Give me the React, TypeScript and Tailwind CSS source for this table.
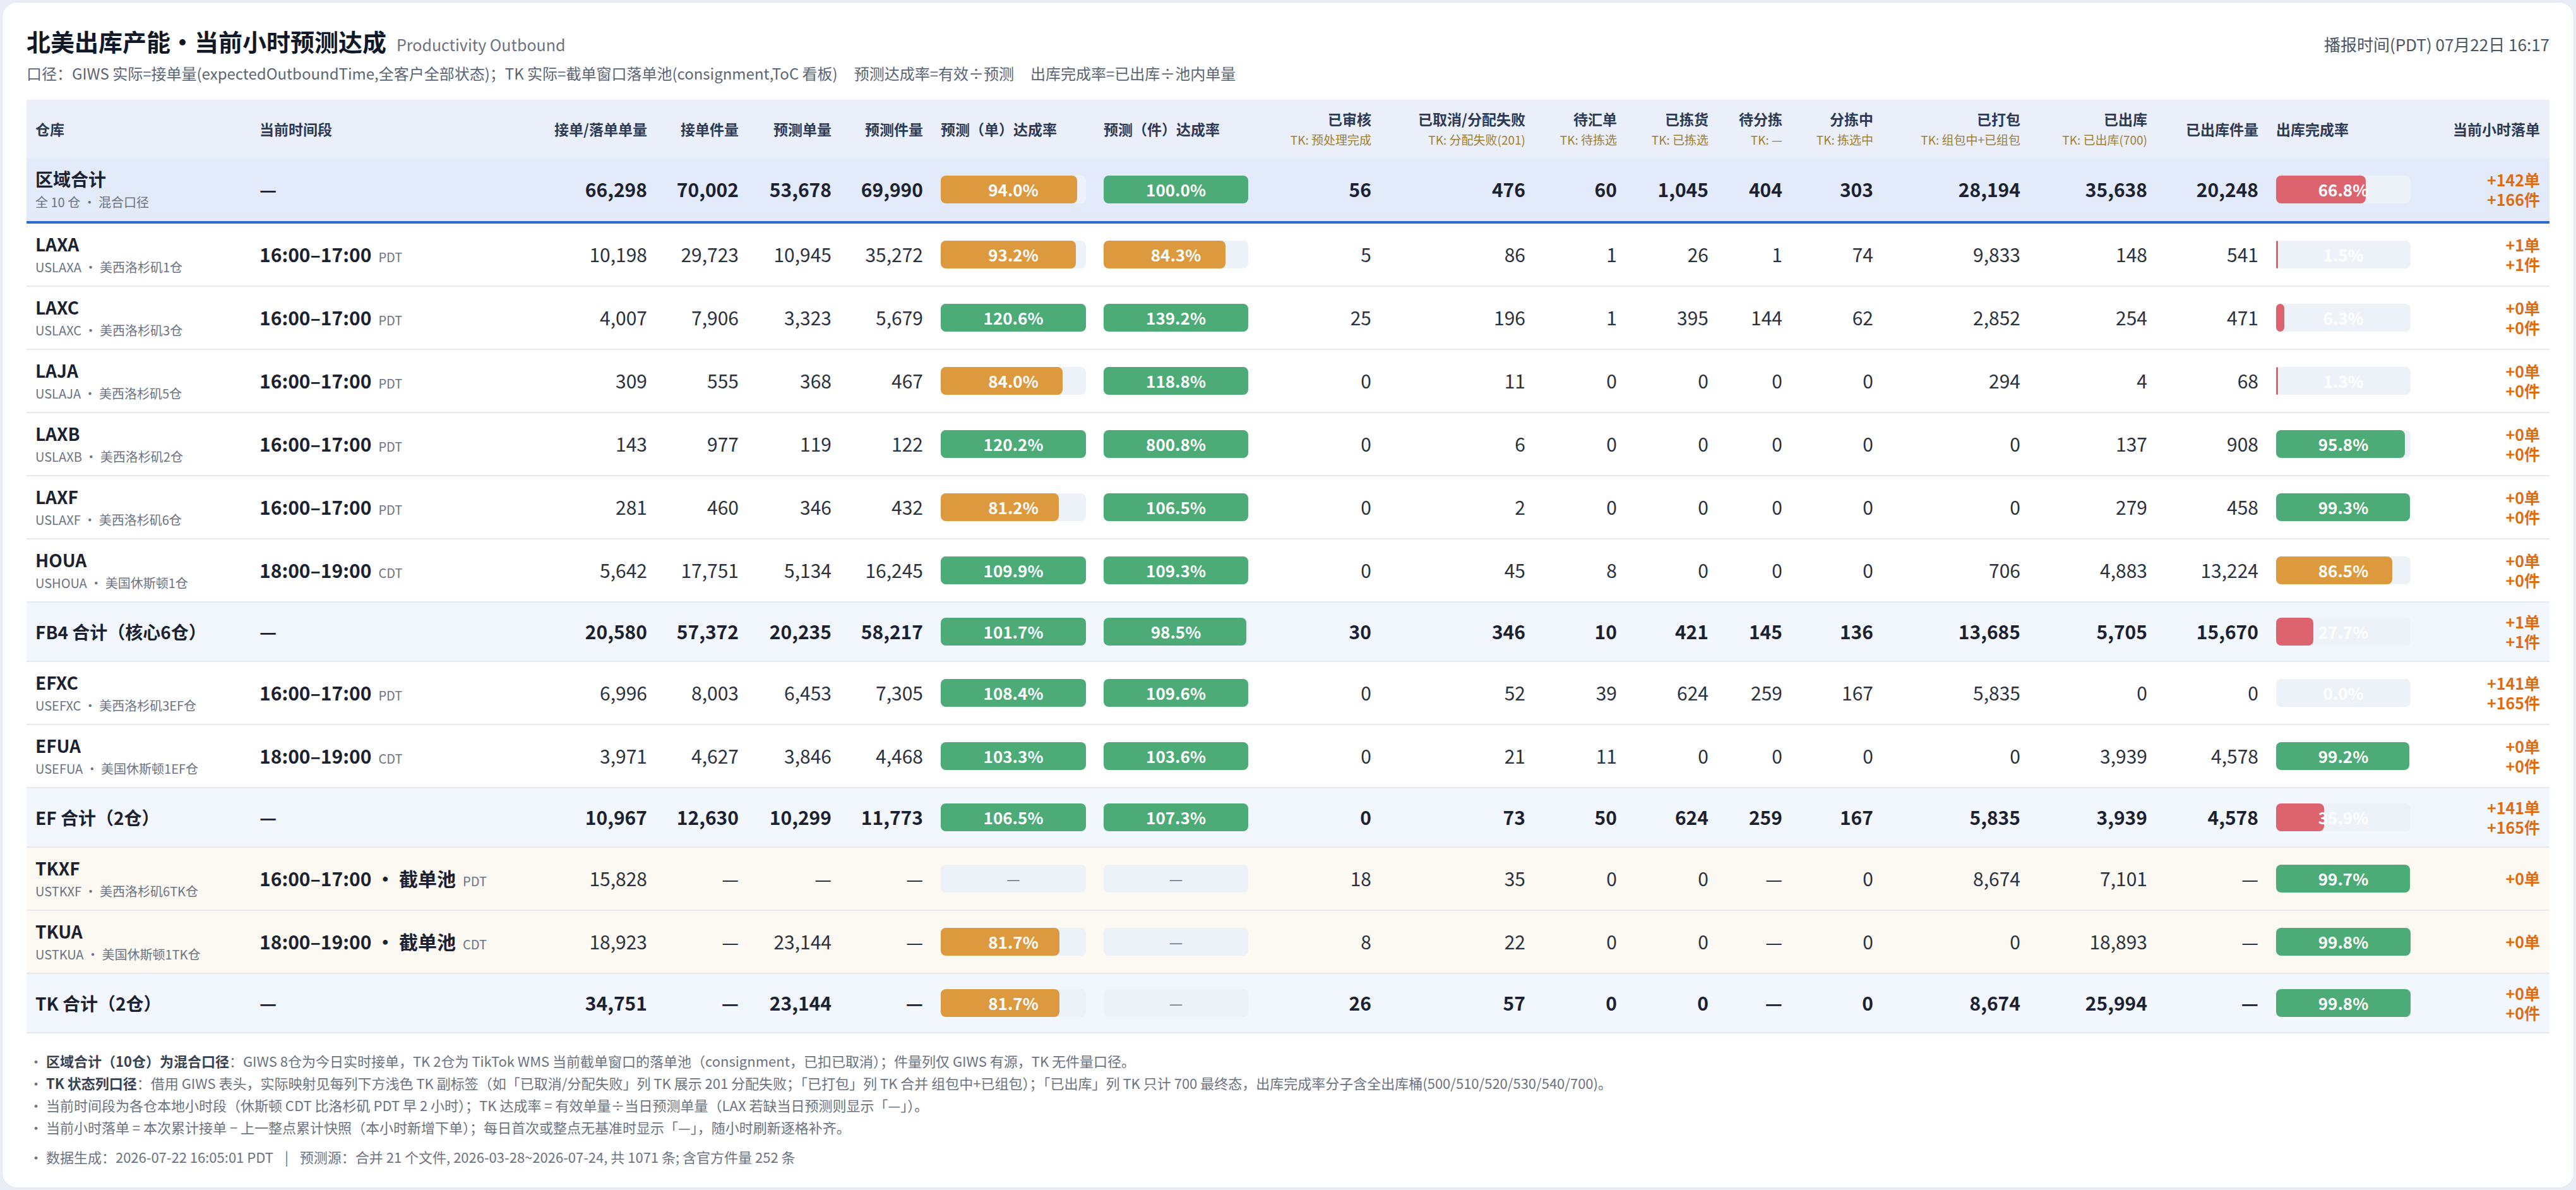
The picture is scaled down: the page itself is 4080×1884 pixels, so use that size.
import React from "react";

const GRID =
  "grid grid-cols-[355px_433px_209px_145px_147px_145px_258px_257px_195px_244px_145px_145px_117px_144px_233px_201px_176px_241px_205px]";

type Kind = "region" | "data" | "sub" | "tk";

type Row = {
  kind: Kind;
  name: string;
  sub?: string;
  time?: string;
  tz?: string;
  a: string[];
  b1: number | null;
  b2: number | null;
  c: string[];
  b3: number | null;
  d: string[];
};

const rows: Row[] = [
  {
    kind: "region",
    name: "区域合计",
    sub: "全 10 仓 · 混合口径",
    a: ["66,298", "70,002", "53,678", "69,990"],
    b1: 94.0,
    b2: 100.0,
    c: ["56", "476", "60", "1,045", "404", "303", "28,194", "35,638", "20,248"],
    b3: 66.8,
    d: ["+142单", "+166件"],
  },
  {
    kind: "data",
    name: "LAXA",
    sub: "USLAXA · 美西洛杉矶1仓",
    time: "16:00–17:00",
    tz: "PDT",
    a: ["10,198", "29,723", "10,945", "35,272"],
    b1: 93.2,
    b2: 84.3,
    c: ["5", "86", "1", "26", "1", "74", "9,833", "148", "541"],
    b3: 1.5,
    d: ["+1单", "+1件"],
  },
  {
    kind: "data",
    name: "LAXC",
    sub: "USLAXC · 美西洛杉矶3仓",
    time: "16:00–17:00",
    tz: "PDT",
    a: ["4,007", "7,906", "3,323", "5,679"],
    b1: 120.6,
    b2: 139.2,
    c: ["25", "196", "1", "395", "144", "62", "2,852", "254", "471"],
    b3: 6.3,
    d: ["+0单", "+0件"],
  },
  {
    kind: "data",
    name: "LAJA",
    sub: "USLAJA · 美西洛杉矶5仓",
    time: "16:00–17:00",
    tz: "PDT",
    a: ["309", "555", "368", "467"],
    b1: 84.0,
    b2: 118.8,
    c: ["0", "11", "0", "0", "0", "0", "294", "4", "68"],
    b3: 1.3,
    d: ["+0单", "+0件"],
  },
  {
    kind: "data",
    name: "LAXB",
    sub: "USLAXB · 美西洛杉矶2仓",
    time: "16:00–17:00",
    tz: "PDT",
    a: ["143", "977", "119", "122"],
    b1: 120.2,
    b2: 800.8,
    c: ["0", "6", "0", "0", "0", "0", "0", "137", "908"],
    b3: 95.8,
    d: ["+0单", "+0件"],
  },
  {
    kind: "data",
    name: "LAXF",
    sub: "USLAXF · 美西洛杉矶6仓",
    time: "16:00–17:00",
    tz: "PDT",
    a: ["281", "460", "346", "432"],
    b1: 81.2,
    b2: 106.5,
    c: ["0", "2", "0", "0", "0", "0", "0", "279", "458"],
    b3: 99.3,
    d: ["+0单", "+0件"],
  },
  {
    kind: "data",
    name: "HOUA",
    sub: "USHOUA · 美国休斯顿1仓",
    time: "18:00–19:00",
    tz: "CDT",
    a: ["5,642", "17,751", "5,134", "16,245"],
    b1: 109.9,
    b2: 109.3,
    c: ["0", "45", "8", "0", "0", "0", "706", "4,883", "13,224"],
    b3: 86.5,
    d: ["+0单", "+0件"],
  },
  {
    kind: "sub",
    name: "FB4 合计（核心6仓）",
    a: ["20,580", "57,372", "20,235", "58,217"],
    b1: 101.7,
    b2: 98.5,
    c: ["30", "346", "10", "421", "145", "136", "13,685", "5,705", "15,670"],
    b3: 27.7,
    d: ["+1单", "+1件"],
  },
  {
    kind: "data",
    name: "EFXC",
    sub: "USEFXC · 美西洛杉矶3EF仓",
    time: "16:00–17:00",
    tz: "PDT",
    a: ["6,996", "8,003", "6,453", "7,305"],
    b1: 108.4,
    b2: 109.6,
    c: ["0", "52", "39", "624", "259", "167", "5,835", "0", "0"],
    b3: 0,
    d: ["+141单", "+165件"],
  },
  {
    kind: "data",
    name: "EFUA",
    sub: "USEFUA · 美国休斯顿1EF仓",
    time: "18:00–19:00",
    tz: "CDT",
    a: ["3,971", "4,627", "3,846", "4,468"],
    b1: 103.3,
    b2: 103.6,
    c: ["0", "21", "11", "0", "0", "0", "0", "3,939", "4,578"],
    b3: 99.2,
    d: ["+0单", "+0件"],
  },
  {
    kind: "sub",
    name: "EF 合计（2仓）",
    a: ["10,967", "12,630", "10,299", "11,773"],
    b1: 106.5,
    b2: 107.3,
    c: ["0", "73", "50", "624", "259", "167", "5,835", "3,939", "4,578"],
    b3: 35.9,
    d: ["+141单", "+165件"],
  },
  {
    kind: "tk",
    name: "TKXF",
    sub: "USTKXF · 美西洛杉矶6TK仓",
    time: "16:00–17:00 • 截单池",
    tz: "PDT",
    a: ["15,828", "—", "—", "—"],
    b1: null,
    b2: null,
    c: ["18", "35", "0", "0", "—", "0", "8,674", "7,101", "—"],
    b3: 99.7,
    d: ["+0单"],
  },
  {
    kind: "tk",
    name: "TKUA",
    sub: "USTKUA · 美国休斯顿1TK仓",
    time: "18:00–19:00 • 截单池",
    tz: "CDT",
    a: ["18,923", "—", "23,144", "—"],
    b1: 81.7,
    b2: null,
    c: ["8", "22", "0", "0", "—", "0", "0", "18,893", "—"],
    b3: 99.8,
    d: ["+0单"],
  },
  {
    kind: "sub",
    name: "TK 合计（2仓）",
    a: ["34,751", "—", "23,144", "—"],
    b1: 81.7,
    b2: null,
    c: ["26", "57", "0", "0", "—", "0", "8,674", "25,994", "—"],
    b3: 99.8,
    d: ["+0单", "+0件"],
  },
];

type Head = { l: string; s?: string; al: "l" | "r" };
const heads: Head[] = [
  { l: "仓库", al: "l" },
  { l: "当前时间段", al: "l" },
  { l: "接单/落单单量", al: "r" },
  { l: "接单件量", al: "r" },
  { l: "预测单量", al: "r" },
  { l: "预测件量", al: "r" },
  { l: "预测（单）达成率", al: "l" },
  { l: "预测（件）达成率", al: "l" },
  { l: "已审核", s: "TK: 预处理完成", al: "r" },
  { l: "已取消/分配失败", s: "TK: 分配失败(201)", al: "r" },
  { l: "待汇单", s: "TK: 待拣选", al: "r" },
  { l: "已拣货", s: "TK: 已拣选", al: "r" },
  { l: "待分拣", s: "TK: —", al: "r" },
  { l: "分拣中", s: "TK: 拣选中", al: "r" },
  { l: "已打包", s: "TK: 组包中+已组包", al: "r" },
  { l: "已出库", s: "TK: 已出库(700)", al: "r" },
  { l: "已出库件量", al: "r" },
  { l: "出库完成率", al: "l" },
  { l: "当前小时落单", al: "r" },
];

function Bar({ v }: { v: number | null }) {
  if (v === null) {
    return (
      <div className="flex h-[44px] items-center justify-center rounded-[8px] bg-[#edf1f8] text-[24px] text-[#6b7280]">
        —
      </div>
    );
  }
  const color =
    v >= 95 ? "bg-[#4cab76]" : v >= 80 ? "bg-[#dc993d]" : "bg-[#dd636f]";
  return (
    <div className="relative h-[44px] rounded-[8px] bg-[#edf1f8]">
      {v > 0 && (
        <div
          className={`absolute left-0 top-0 h-full rounded-[8px] ${color}`}
          style={{ width: `${Math.min(v, 100)}%` }}
        />
      )}
      <div className="absolute inset-0 flex items-center justify-center text-[26px] font-bold text-white">
        {v.toFixed(1)}%
      </div>
    </div>
  );
}

function Num({ v, bold }: { v: string; bold: boolean }) {
  return (
    <div
      className={
        bold
          ? "pr-[14px] text-right text-[30px] font-bold text-[#1b2130]"
          : "pr-[14px] text-right text-[30px] text-[#2b313d]"
      }
    >
      {v}
    </div>
  );
}

function TableRow({ r }: { r: Row }) {
  const bold = r.kind === "region" || r.kind === "sub";
  let rowCls = "";
  if (r.kind === "region")
    rowCls = "h-[104px] border-b-4 border-[#2f69d8] bg-[#e3eaf9]";
  else if (r.kind === "sub")
    rowCls = "h-[94px] border-b-2 border-[#e4e8f0] bg-[#f2f6fd]";
  else if (r.kind === "tk")
    rowCls = "h-[100px] border-b-2 border-[#e9e9ec] bg-[#fcf8f2]";
  else rowCls = "h-[100px] border-b-2 border-[#e6eaf1] bg-white";

  return (
    <div className={`${GRID} items-center ${rowCls}`}>
      <div className="pl-[14px]">
        <div className="text-[28px] font-bold leading-[36px] text-[#1b2130]">
          {r.name}
        </div>
        {r.sub && (
          <div className="mt-[4px] text-[20px] leading-[30px] text-[#6b7383]">
            {r.sub}
          </div>
        )}
      </div>
      <div className="flex items-baseline pl-[14px]">
        {r.time ? (
          <>
            <span className="text-[30px] font-bold text-[#1b2130]">
              {r.time}
            </span>
            <span className="ml-[11px] text-[20px] text-[#6b7383]">
              {r.tz}
            </span>
          </>
        ) : (
          <span className="text-[30px] font-bold text-[#1b2130]">—</span>
        )}
      </div>
      {r.a.map((v, i) => (
        <Num key={"a" + i} v={v} bold={bold} />
      ))}
      <div className="px-[14px]">
        <Bar v={r.b1} />
      </div>
      <div className="px-[14px]">
        <Bar v={r.b2} />
      </div>
      {r.c.map((v, i) => (
        <Num key={"c" + i} v={v} bold={bold} />
      ))}
      <div className="px-[14px]">
        <Bar v={r.b3} />
      </div>
      <div className="pr-[14px] text-right text-[25px] font-semibold leading-[31px] text-[#e06c12]">
        {r.d.map((x, i) => (
          <div key={i}>{x}</div>
        ))}
      </div>
    </div>
  );
}

export default function App() {
  return (
    <div className="h-[1884px] w-full bg-[#e9edf5] p-[3px] font-['Noto_Sans_CJK_SC',sans-serif]">
      <div className="flex h-full flex-col rounded-[24px] border border-[#e1e6ef] bg-white px-[38px] pt-[37px]">
        <div className="flex items-baseline justify-between">
          <div className="flex items-baseline">
            <h1 className="text-[38px] font-bold leading-[48px] text-[#111827]">
              北美出库产能•当前小时预测达成
            </h1>
            <span className="ml-[16px] text-[25px] text-[#6b7280]">
              Productivity Outbound
            </span>
          </div>
          <div className="text-[26px] text-[#4b5563]">
            播报时间(PDT) 07月22日 16:17
          </div>
        </div>
        <div className="mt-[10px] text-[24px] leading-[32px] text-[#5b6575]">
          <span>
            口径：GIWS 实际=接单量(expectedOutboundTime,全客户全部状态)；TK
            实际=截单窗口落单池(consignment,ToC 看板)
          </span>
          <span className="ml-[26px]">预测达成率=有效÷预测</span>
          <span className="ml-[26px]">出库完成率=已出库÷池内单量</span>
        </div>

        <div className="mt-[26px]">
          <div className={`${GRID} h-[92px] items-center bg-[#eaeffa]`}>
            {heads.map((h, i) => (
              <div
                key={i}
                className={
                  h.al === "l"
                    ? "pl-[14px] text-left"
                    : "pr-[14px] text-right"
                }
              >
                <div className="text-[23px] font-bold leading-[30px] text-[#2d3a55]">
                  {h.l}
                </div>
                {h.s && (
                  <div className="mt-[5px] text-[19px] leading-[26px] text-[#a0802e]">
                    {h.s}
                  </div>
                )}
              </div>
            ))}
          </div>
          {rows.map((r, i) => (
            <TableRow key={i} r={r} />
          ))}
        </div>

        <div className="mt-[26px] pl-[4px] text-[22px] leading-[35px] text-[#6b7280]">
          <div>
            ·{" "}
            <b className="font-bold text-[#374151]">
              区域合计（10仓）为混合口径
            </b>
            ：GIWS 8仓为今日实时接单，TK 2仓为 TikTok WMS
            当前截单窗口的落单池（consignment，已扣已取消）；件量列仅 GIWS
            有源，TK 无件量口径。
          </div>
          <div>
            · <b className="font-bold text-[#374151]">TK 状态列口径</b>
            ：借用 GIWS 表头，实际映射见每列下方浅色 TK 副标签（如「已取消/分配失败」列
            TK 展示 201 分配失败；「已打包」列 TK 合并
            组包中+已组包）；「已出库」列 TK 只计 700
            最终态，出库完成率分子含全出库桶(500/510/520/530/540/700)。
          </div>
          <div>
            · 当前时间段为各仓本地小时段（休斯顿 CDT 比洛杉矶 PDT 早 2
            小时）；TK 达成率 = 有效单量÷当日预测单量（LAX
            若缺当日预测则显示「—」）。
          </div>
          <div>
            · 当前小时落单 = 本次累计接单 − 上一整点累计快照（本小时新增下单）；每日首次或整点无基准时显示「—」，随小时刷新逐格补齐。
          </div>
          <div className="mt-[12px]">
            · 数据生成：2026-07-22 16:05:01 PDT
            <span className="mx-[18px]">|</span>
            预测源：合并 21 个文件, 2026-03-28~2026-07-24, 共 1071 条; 含官方件量
            252 条
          </div>
        </div>
      </div>
    </div>
  );
}
